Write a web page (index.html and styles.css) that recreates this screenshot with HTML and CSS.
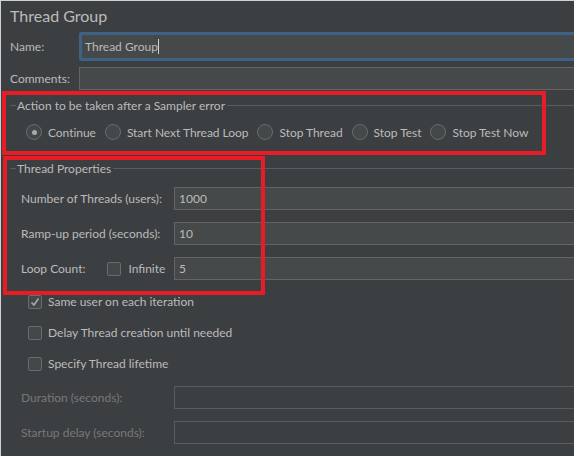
FILE: index.html
```html
<!DOCTYPE html>
<html>
<head>
<meta charset="utf-8">
<link rel="stylesheet" href="styles.css">
</head>
<body>
<div class="panel">
  <div class="title">Thread Group</div>
  <div class="row name-row">
    <label class="lbl">Name:</label>
    <div class="input focus">Thread Group<span class="caret"></span></div>
  </div>
  <div class="row comments-row">
    <label class="lbl">Comments:</label>
    <div class="input"></div>
  </div>

  <div class="fieldset fs-action">
    <div class="legend"><span>Action to be taken after a Sampler error</span></div>
    <div class="radios">
      <div class="radio on"><span class="circle"></span>Continue</div>
      <div class="radio"><span class="circle"></span>Start Next Thread Loop</div>
      <div class="radio"><span class="circle"></span>Stop Thread</div>
      <div class="radio"><span class="circle"></span>Stop Test</div>
      <div class="radio"><span class="circle"></span>Stop Test Now</div>
    </div>
  </div>

  <div class="fieldset fs-props">
    <div class="legend"><span>Thread Properties</span></div>
    <div class="grid">
      <div class="glbl">Number of Threads (users):</div>
      <div class="input">1000</div>
      <div class="glbl">Ramp-up period (seconds):</div>
      <div class="input">10</div>
      <div class="glbl loop"><span>Loop Count:</span><span class="chk-inline"><span class="box"></span>Infinite</span></div>
      <div class="input">5</div>
    </div>
  </div>

  <div class="checks">
    <div class="check"><span class="box checked"><svg width="12" height="12" viewBox="0 0 12 12"><path d="M2.5 6.5 L5 9 L9.5 2.5" fill="none" stroke="#a9a9a9" stroke-width="1.6"/></svg></span>Same user on each iteration</div>
    <div class="check"><span class="box"></span>Delay Thread creation until needed</div>
    <div class="check"><span class="box"></span>Specify Thread lifetime</div>
  </div>

  <div class="grid disabled">
    <div class="glbl">Duration (seconds):</div>
    <div class="input"></div>
    <div class="glbl">Startup delay (seconds):</div>
    <div class="input"></div>
  </div>

  <div class="mark mark1"></div>
  <div class="mark mark2"></div>
</div>
</body>
</html>
```
FILE: styles.css
```css
html, body {
  margin: 0;
  padding: 0;
  background: #3c3f41;
  overflow: hidden;
}
.panel {
  position: relative;
  width: 574px;
  height: 456px;
  box-sizing: border-box;
  border-top: 1px solid #cfd0d1;
  border-left: 1px solid #cfd0d1;
  background: #3c3f41;
  color: #bbbbbb;
  font-family: "Lato", "Noto Sans", sans-serif;
  font-size: 12px;
  overflow: hidden;
}
.title {
  height: 31px;
  line-height: 30px;
  padding-left: 9px;
  font-size: 16px;
  color: #bbbbbb;
}
.row {
  display: flex;
  align-items: center;
}
.lbl {
  width: 70px;
  padding-left: 9px;
  flex: none;
}
.input {
  box-sizing: border-box;
  height: 23px;
  background: #45494a;
  border: 1px solid #646464;
  padding-left: 4px;
  line-height: 21px;
  color: #bbbbbb;
  flex: 1;
  margin-right: -10px;
}
.name-row { height: 29px; }
.name-row .input.focus {
  height: 29px;
  line-height: 23px;
  border: 3px solid #3e6186;
  border-radius: 2px;
  margin-left: -1px;
  padding-left: 3px;
}
.caret {
  display: inline-block;
  width: 1px;
  height: 15px;
  background: #d0d0d0;
  vertical-align: -3px;
}
.comments-row {
  margin-top: 6px;
  height: 23px;
}
.comments-row .lbl { width: 69px; }

.fieldset {
  margin-left: 9px;
}
.legend {
  display: flex;
  align-items: center;
  height: 12px;
}
.legend::before {
  content: "";
  width: 6px;
  border-top: 1px solid #5a5d5f;
}
.legend::after {
  content: "";
  flex: 1;
  border-top: 1px solid #5a5d5f;
}
.legend span {
  padding: 0 2px 0 1px;
}
.fs-action {
  margin-top: 9px;
}
.radios {
  display: flex;
  align-items: center;
  height: 30px;
  margin-top: 6px;
  padding-left: 16px;
  letter-spacing: -0.04px;
}
.radio {
  display: flex;
  align-items: center;
  margin-right: 9px;
}
.circle {
  box-sizing: border-box;
  width: 16px;
  height: 16px;
  border-radius: 50%;
  border: 1px solid #6b6b6b;
  background: #43494a;
  margin-right: 6px;
  position: relative;
}
.radio.on .circle::after {
  content: "";
  position: absolute;
  left: 4.5px;
  top: 4.5px;
  width: 5px;
  height: 5px;
  border-radius: 50%;
  background: #a9a9a9;
}
.fs-props {
  margin-top: 15px;
}
.grid {
  display: grid;
  grid-template-columns: 153px 1fr;
  row-gap: 12px;
  align-items: center;
  margin-left: 3px;
}
.fs-props .grid {
  margin-top: 13px;
  margin-left: 11px;
}
.loop {
  display: flex;
  align-items: center;
}
.chk-inline {
  display: flex;
  align-items: center;
  margin-left: 22px;
}
.box {
  box-sizing: border-box;
  width: 14px;
  height: 14px;
  border: 1px solid #6b6b6b;
  background: #43494a;
  border-radius: 2px;
  margin-right: 6px;
  display: inline-flex;
  align-items: center;
  justify-content: center;
  flex: none;
}
.chk-inline .box { margin-right: 7px; }
.checks {
  margin-top: 6px;
  padding-left: 27px;
}
.check {
  display: flex;
  align-items: center;
  height: 31px;
}
.disabled {
  margin-top: 7px;
  margin-left: 20px;
}
.disabled .glbl { color: #787878; }
.disabled .input {
  background: #3c3f41;
  border-color: #595b5d;
}
.mark {
  position: absolute;
  border: 4px solid #e81c24;
  box-sizing: border-box;
}
.mark1 { left: 1px; top: 90px; width: 544px; height: 64px; }
.mark2 { left: 2px; top: 155px; width: 262px; height: 139px; }
```
